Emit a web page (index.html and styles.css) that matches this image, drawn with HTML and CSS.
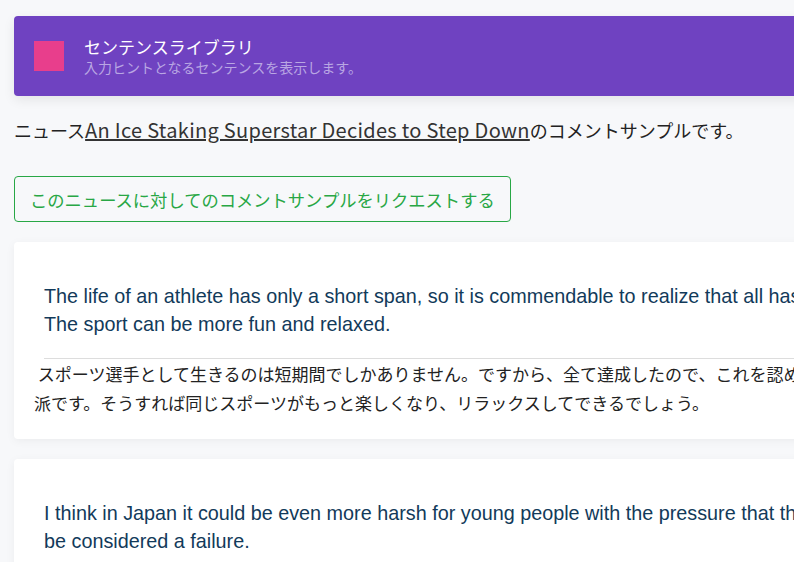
FILE: index.html
```html
<!DOCTYPE html>
<html lang="ja">

<head>
    <meta charset="UTF-8">
    <meta name="viewport" content="width=device-width, initial-scale=1.0">
    <title>センテンスライブラリ</title>
    <link rel="stylesheet" href="styles.css">
</head>

<body>
    <div class="page">
        <div class="header">
            <div class="logo"></div>
            <div class="header-text">
                <h1 class="title">センテンスライブラリ</h1>
                <p class="subtitle">入力ヒントとなるセンテンスを表示します。</p>
            </div>
        </div>

        <p class="news">ニュース<a href="#" class="news-link">An Ice Staking Superstar Decides to Step Down</a>のコメントサンプルです。</p>

        <button class="request-btn">このニュースに対してのコメントサンプルをリクエストする</button>

        <div class="comment">
            <p class="comment-en">The life of an athlete has only a short span, so it is commendable to realize that all has been achieved and to retire now.
The sport can be more fun and relaxed.</p>
            <hr class="divider">
            <p class="comment-ja"> スポーツ選手として生きるのは短期間でしかありません。ですから、全て達成したので、これを認めて引退するのは立
派です。そうすれば同じスポーツがもっと楽しくなり、リラックスしてできるでしょう。</p>
        </div>

        <div class="comment">
            <p class="comment-en">I think in Japan it could be even more harsh for young people with the pressure that they must win, or else they would
be considered a failure.</p>
            <hr class="divider">
            <p class="comment-ja"> 日本では、若い人たちにとっては勝たなければ失敗だと思われるというプレッシャーがあり、もっと厳しいかもしれません。</p>
        </div>
    </div>
</body>

</html>
```

FILE: styles.css
```css
* {
    margin: 0;
    padding: 0;
    box-sizing: border-box;
}

body {
    background: #f7f8fa;
    font-family: "Noto Sans CJK JP", "Noto Sans", sans-serif;
    color: #222;
    overflow: hidden;
}

.page {
    width: 1400px;
    padding: 16px 14px;
}

/* Header bar */
.header {
    display: flex;
    align-items: center;
    gap: 20px;
    height: 80px;
    padding: 0 20px;
    background: #6f42c1;
    border-radius: 4px;
    box-shadow: 0 4px 12px rgba(0, 0, 0, 0.08);
}

.logo {
    width: 30px;
    height: 30px;
    background: #e83e8c;
}

.title {
    font-size: 17px;
    font-weight: normal;
    color: #fff;
    line-height: 22px;
}

.subtitle {
    font-size: 14px;
    color: #b9a6e3;
    line-height: 18px;
}

/* News line */
.news {
    margin-top: 22px;
    font-size: 18px;
    line-height: 24px;
}

.news-link {
    font-size: 20px;
    letter-spacing: 0.3px;
    color: #333;
    text-decoration: underline;
}

.request-btn {
    display: block;
    margin: 34px 0 1px;
    height: 46px;
    padding: 0 15px;
    background: transparent;
    border: 1px solid #28a745;
    border-radius: 4px;
    color: #28a745;
    font-family: inherit;
    font-size: 17.3px;
    cursor: pointer;
}

/* Comment cards */
.comment {
    margin-top: 20px;
    padding: 40px 30px 22px 30px;
    background: #fff;
    border-radius: 4px;
    box-shadow: 0 2px 10px rgba(0, 0, 0, 0.05);
}

.comment-en {
    font-family: "Liberation Sans", Arial, sans-serif;
    font-size: 19.8px;
    line-height: 28px;
    color: #123a5a;
    white-space: pre-line;
}

.divider {
    margin-top: 20px;
    border: 0;
    border-top: 1px solid #ddd;
}

.comment-ja {
    margin-left: -10px;
    font-size: 17px;
    line-height: 29px;
    color: #222;
    white-space: pre-wrap;
}
```
